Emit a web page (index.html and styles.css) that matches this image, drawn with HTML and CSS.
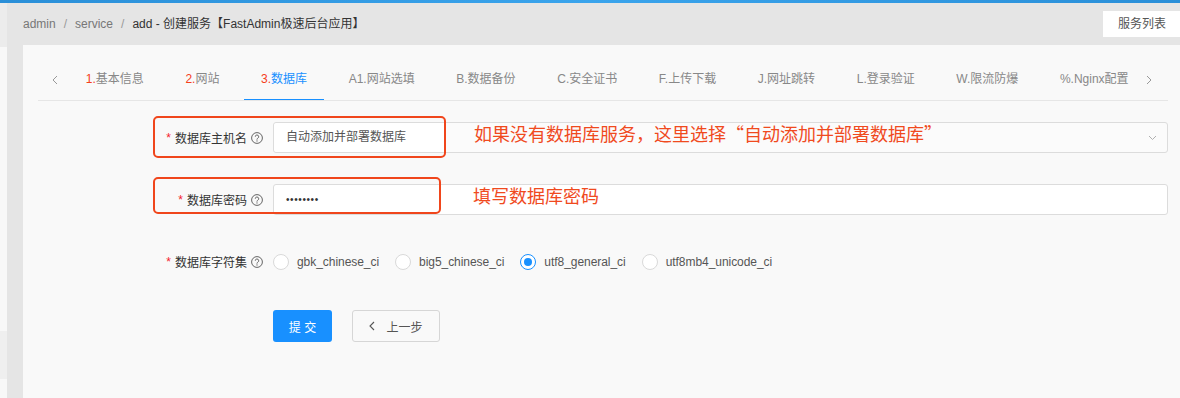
FILE: index.html
```html
<!DOCTYPE html>
<html lang="zh-CN">
<head>
    <meta charset="UTF-8">
    <meta name="viewport" content="width=device-width, initial-scale=1.0">
    <title>创建服务 - FastAdmin极速后台应用</title>
    <link rel="stylesheet" href="styles.css">
</head>
<body>

    <div class="topbar"></div>

    <div class="layout">
        <aside class="side">
            <div class="side-top"></div>
            <div class="side-block"></div>
        </aside>

        <main class="main">
            <header class="page-head">
                <div class="crumbs">
                    <span class="crumb">admin</span><span class="sep">/</span><span class="crumb">service</span><span class="sep">/</span><span class="crumb-cur">add - 创建服务【FastAdmin极速后台应用】</span>
                </div>
                <a href="#" class="head-btn">服务列表</a>
            </header>

            <section class="panel">
                <nav class="tabs">
                    <span class="tab-arrow">
                        <svg width="6" height="10" viewBox="0 0 6 10"><path d="M5 1L1 5l4 4" fill="none" stroke="#999" stroke-width="1"/></svg>
                    </span>
                    <ul class="tab-list">
                        <li class="tab"><span class="tab-label"><em class="num">1.</em>基本信息</span></li>
                        <li class="tab"><span class="tab-label"><em class="num">2.</em>网站</span></li>
                        <li class="tab active"><span class="tab-label"><em class="num">3.</em>数据库</span></li>
                        <li class="tab"><span class="tab-label">A1.网站选填</span></li>
                        <li class="tab"><span class="tab-label">B.数据备份</span></li>
                        <li class="tab"><span class="tab-label">C.安全证书</span></li>
                        <li class="tab"><span class="tab-label">F.上传下载</span></li>
                        <li class="tab"><span class="tab-label">J.网址跳转</span></li>
                        <li class="tab"><span class="tab-label">L.登录验证</span></li>
                        <li class="tab"><span class="tab-label">W.限流防爆</span></li>
                        <li class="tab"><span class="tab-label">%.Nginx配置</span></li>
                    </ul>
                    <span class="tab-arrow tab-arrow-right">
                        <svg width="6" height="10" viewBox="0 0 6 10"><path d="M1 1l4 4-4 4" fill="none" stroke="#999" stroke-width="1"/></svg>
                    </span>
                </nav>

                <form class="form">
                    <div class="form-row">
                        <label class="form-label"><span class="req">*</span>数据库主机名
                            <svg class="help" width="12" height="12" viewBox="0 0 12 12"><circle cx="6" cy="6" r="5.4" fill="none" stroke="#555" stroke-width="0.9"/><path d="M4.3 4.7a1.7 1.7 0 1 1 2.5 1.5c-.5.3-.8.6-.8 1.1v.4" fill="none" stroke="#555" stroke-width="0.9"/><circle cx="6" cy="8.9" r="0.6" fill="#555"/></svg>
                        </label>
                        <div class="select">
                            <span class="select-value">自动添加并部署数据库</span>
                            <svg class="chevron" width="9" height="6" viewBox="0 0 9 6"><path d="M1 1l3.5 3.5L8 1" fill="none" stroke="#b0b0b0" stroke-width="1"/></svg>
                        </div>
                    </div>

                    <div class="form-row">
                        <label class="form-label"><span class="req">*</span>数据库密码
                            <svg class="help" width="12" height="12" viewBox="0 0 12 12"><circle cx="6" cy="6" r="5.4" fill="none" stroke="#555" stroke-width="0.9"/><path d="M4.3 4.7a1.7 1.7 0 1 1 2.5 1.5c-.5.3-.8.6-.8 1.1v.4" fill="none" stroke="#555" stroke-width="0.9"/><circle cx="6" cy="8.9" r="0.6" fill="#555"/></svg>
                        </label>
                        <div class="input password">••••••••</div>
                    </div>

                    <div class="form-row radios-row">
                        <label class="form-label"><span class="req">*</span>数据库字符集
                            <svg class="help" width="12" height="12" viewBox="0 0 12 12"><circle cx="6" cy="6" r="5.4" fill="none" stroke="#555" stroke-width="0.9"/><path d="M4.3 4.7a1.7 1.7 0 1 1 2.5 1.5c-.5.3-.8.6-.8 1.1v.4" fill="none" stroke="#555" stroke-width="0.9"/><circle cx="6" cy="8.9" r="0.6" fill="#555"/></svg>
                        </label>
                        <div class="radio-group">
                            <span class="radio"><i class="radio-dot"></i>gbk_chinese_ci</span>
                            <span class="radio"><i class="radio-dot"></i>big5_chinese_ci</span>
                            <span class="radio checked"><i class="radio-dot"></i>utf8_general_ci</span>
                            <span class="radio"><i class="radio-dot"></i>utf8mb4_unicode_ci</span>
                        </div>
                    </div>

                    <div class="form-row buttons-row">
                        <span></span>
                        <div class="buttons">
                            <button type="button" class="btn btn-primary">提 交</button>
                            <button type="button" class="btn btn-default">
                                <svg width="6" height="10" viewBox="0 0 6 10"><path d="M5 1L1 5l4 4" fill="none" stroke="#555" stroke-width="1.1"/></svg>
                                上一步
                            </button>
                        </div>
                    </div>
                </form>
            </section>
        </main>
    </div>

    <!-- annotations drawn over the screenshot -->
    <div class="mark mark-host"></div>
    <div class="mark mark-pass"></div>
    <p class="note note-host">如果没有数据库服务，这里选择“自动添加并部署数据库”</p>
    <p class="note note-pass">填写数据库密码</p>

</body>
</html>
```

FILE: styles.css
```css
/* Basic reset */
* {
    margin: 0;
    padding: 0;
    box-sizing: border-box;
}

body {
    position: relative;
    width: 1180px;
    height: 398px;
    overflow: hidden;
    font-family: "Liberation Sans", "Noto Sans CJK SC", sans-serif;
    font-size: 12px;
    color: #333;
    background-color: #e5e5e5;
}

/* Blue strip on top */
.topbar {
    height: 3px;
    background: linear-gradient(90deg, #2a8fd8, #3aa4ec 50%, #2a8fd8);
}

.layout {
    display: flex;
    height: 395px;
}

/* Narrow strip of the side menu */
.side {
    width: 7px;
    display: flex;
    flex-direction: column;
    background-color: #f8f8f8;
}

.side-top {
    height: 44px;
    background-color: #ececec;
}

.side-block {
    height: 48px;
    margin-top: 284px;
    background-color: #efefef;
}

.main {
    flex: 1;
    min-width: 0;
    display: flex;
    flex-direction: column;
    padding-left: 16px;
    background-color: #e5e5e5;
}

/* Header with breadcrumbs */
.page-head {
    height: 42px;
    display: flex;
    justify-content: space-between;
    align-items: flex-start;
}

.crumbs {
    margin-top: 14px;
    line-height: 14px;
    color: #777;
}

.sep {
    padding: 0 8px;
    color: #999;
}

.crumb-cur {
    color: #333;
}

.head-btn {
    margin-top: 8px;
    width: 77px;
    height: 26px;
    line-height: 26px;
    padding-left: 15px;
    background-color: #fff;
    color: #555;
    text-decoration: none;
}

/* Main panel */
.panel {
    flex: 1;
    padding: 15px 12px 0 15px;
    background-color: #f9f9f9;
}

/* Tabs */
.tabs {
    display: flex;
    height: 41px;
    border-bottom: 1px solid #e6e6e6;
}

.tab-arrow {
    flex-shrink: 0;
    width: 27px;
    display: flex;
    align-items: center;
    justify-content: flex-end;
    padding-right: 7px;
    padding-bottom: 1px;
}

.tab-arrow-right {
    width: auto;
    margin-left: auto;
    padding-right: 16px;
}

.tab-list {
    display: flex;
    list-style: none;
    overflow: hidden;
}

.tab {
    flex-shrink: 0;
    padding: 0 4px;
    height: 41px;
}

.tab-label {
    display: block;
    height: 41px;
    padding: 0 16.8px;
    line-height: 39px;
    white-space: nowrap;
    color: #888;
    border-bottom: 2px solid transparent;
}

.num {
    font-style: normal;
    color: #f5401c;
}

.tab.active .tab-label {
    color: #1890ff;
    border-bottom-color: #1890ff;
}

/* Form */
.form {
    padding-top: 21px;
}

.form-row {
    display: grid;
    grid-template-columns: 225px 1fr;
    column-gap: 10px;
    align-items: center;
    height: 31px;
    margin-bottom: 31px;
}

.radios-row {
    margin-bottom: 33px;
}

.buttons-row {
    height: 32px;
}

.form-label {
    display: flex;
    justify-content: flex-end;
    align-items: center;
    color: #333;
}

.req {
    color: #f5222d;
    margin-right: 4px;
}

.help {
    margin-left: 4px;
}

.select,
.input {
    height: 31px;
    border: 1px solid #dcdcdc;
    border-radius: 3px;
    display: flex;
    align-items: center;
}

.select {
    background-color: #fbfbfb;
    padding-right: 10px;
}

.select-value {
    height: 29px;
    width: 172px;
    line-height: 29px;
    padding-left: 12px;
    background-color: #fff;
    color: #555;
    border-radius: 3px 0 0 3px;
}

.chevron {
    margin-left: auto;
}

.input {
    background-color: #fff;
    padding-left: 12px;
}

.password {
    font-size: 10px;
    letter-spacing: 0.6px;
    color: #333;
}

/* Radios */
.radio-group {
    display: flex;
    align-items: center;
}

.radio {
    display: flex;
    align-items: center;
    margin-right: 16px;
    letter-spacing: -0.05px;
    color: #555;
}

.radio-dot {
    width: 16px;
    height: 16px;
    margin-right: 8px;
    border: 1px solid #d9d9d9;
    border-radius: 50%;
    background-color: #fff;
    display: flex;
    align-items: center;
    justify-content: center;
}

.radio.checked .radio-dot {
    border-color: #1890ff;
}

.radio.checked .radio-dot::after {
    content: '';
    width: 8px;
    height: 8px;
    border-radius: 50%;
    background-color: #1890ff;
}

/* Buttons */
.buttons {
    display: flex;
    gap: 20px;
}

.btn {
    height: 32px;
    border-radius: 3px;
    font-family: "Liberation Sans", "Noto Sans CJK SC", sans-serif;
    font-size: 12px;
    cursor: pointer;
}

.btn-primary {
    width: 59px;
    border: none;
    background-color: #1890ff;
    color: #fff;
}

.btn-default {
    width: 88px;
    display: flex;
    align-items: center;
    justify-content: center;
    gap: 11px;
    border: 1px solid #d6d6d6;
    background-color: transparent;
    color: #555;
}

/* Red annotations */
.mark {
    position: absolute;
    border: 2px solid #f0461c;
    border-radius: 5px;
}

.mark-host {
    left: 153px;
    top: 116px;
    width: 293px;
    height: 42px;
}

.mark-pass {
    left: 153px;
    top: 177px;
    width: 288px;
    height: 37px;
}

.note {
    position: absolute;
    font-family: "Noto Sans CJK SC", sans-serif;
    font-size: 18px;
    line-height: 20px;
    color: #f04a1e;
}

.note-host {
    left: 474px;
    top: 123px;
}

.note-pass {
    left: 473px;
    top: 185px;
}
```
